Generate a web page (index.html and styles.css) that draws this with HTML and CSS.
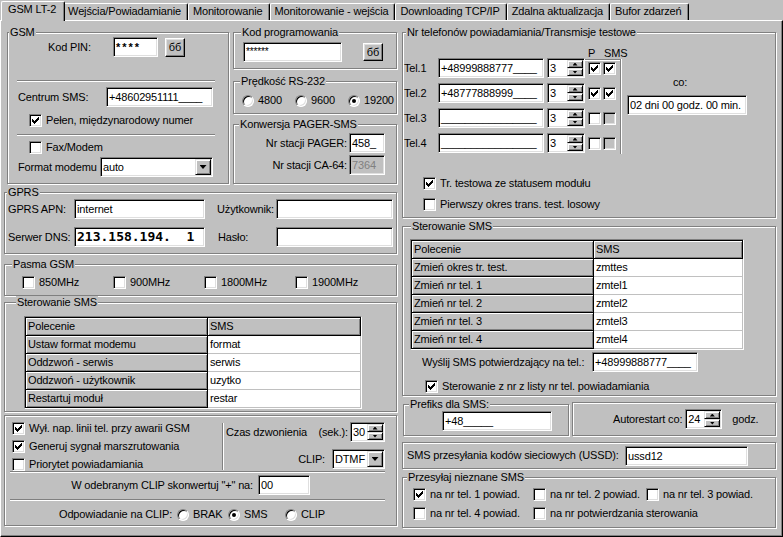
FILE: index.html
```html
<!DOCTYPE html>
<html>
<head>
	<meta charset="utf-8">
	<link rel="stylesheet" href="styles.css">
</head>
<body>
	<div class="tabs">
		<div class="tab active">GSM LT-2</div>
		<div class="tab">Wejścia/Powiadamianie</div>
		<div class="tab">Monitorowanie</div>
		<div class="tab">Monitorowanie - wejścia</div>
		<div class="tab">Downloading TCP/IP</div>
		<div class="tab">Zdalna aktualizacja</div>
		<div class="tab">Bufor zdarzeń</div>
	</div>

	<div class="sheet">
		<!-- left column -->
		<div class="col-left">
			<div class="top-row">
				<div class="group" id="gsm">
					<span class="legend">GSM</span>
					<div class="row" id="pin-row">
						<span class="lbl">Kod PIN:</span>
						<div class="edit" id="pin">****</div>
						<div class="btn eye">бб</div>
					</div>
					<div class="sep gsm-sep" id="gsm-sep1"></div>
					<div class="row" id="centrum-row">
						<span class="lbl">Centrum SMS:</span>
						<div class="edit">+48602951111____</div>
					</div>
					<div class="row check" id="pelen-row">
						<span class="chk"><svg viewBox="0 0 7 7"><path d="M0 2h1v1h1v1h1v-1h1v-1h1v-1h1v-1h1v3h-1v1h-1v1h-1v1h-1v1h-1v-1h-1v-1h-1z"/></svg></span>
						<span>Pełen, międzynarodowy numer</span>
					</div>
					<div class="sep gsm-sep" id="gsm-sep2"></div>
					<div class="row check" id="fax-row">
						<span class="chk"></span>
						<span>Fax/Modem</span>
					</div>
					<div class="row" id="format-row">
						<span class="lbl">Format modemu</span>
						<div class="edit combo"><span class="val">auto</span><span class="drop"></span></div>
					</div>
				</div>

				<div class="stack">
					<div class="group" id="kod">
						<span class="legend">Kod programowania</span>
						<div class="row" id="kod-row">
							<div class="edit" id="kod-edit">******</div>
							<div class="btn eye">бб</div>
						</div>
					</div>
					<div class="group" id="predk">
						<span class="legend">Prędkość RS-232</span>
						<div class="row" id="predk-row">
							<span class="ropt"><span class="radio"></span>4800</span>
							<span class="ropt"><span class="radio"></span>9600</span>
							<span class="ropt"><span class="radio on"></span>19200</span>
						</div>
					</div>
					<div class="group" id="konw">
						<span class="legend">Konwersja PAGER-SMS</span>
						<div class="row konw-row" id="pager-row">
							<span>Nr stacji PAGER:</span>
							<div class="edit">458_</div>
						</div>
						<div class="row konw-row" id="ca-row">
							<span>Nr stacji CA-64:</span>
							<div class="edit disabled">7364</div>
						</div>
					</div>
				</div>
			</div>

			<div class="group" id="gprs">
				<span class="legend">GPRS</span>
				<div class="row gprs-row" id="apn-row">
					<span class="lbl">GPRS APN:</span>
					<div class="edit wide">internet</div>
					<span class="lbl2">Użytkownik:</span>
					<div class="edit narrow"></div>
				</div>
				<div class="row gprs-row" id="dns-row">
					<span class="lbl">Serwer DNS:</span>
					<div class="edit wide dns">213.158.194.  1</div>
					<span class="lbl2">Hasło:</span>
					<div class="edit narrow"></div>
				</div>
			</div>

			<div class="group" id="pasma">
				<span class="legend">Pasma GSM</span>
				<div class="row" id="pasma-row">
					<span class="popt check"><span class="chk"></span>850MHz</span>
					<span class="popt check"><span class="chk"></span>900MHz</span>
					<span class="popt check"><span class="chk"></span>1800MHz</span>
					<span class="popt check"><span class="chk"></span>1900MHz</span>
				</div>
			</div>

			<div class="group" id="ster-l">
				<span class="legend">Sterowanie SMS</span>
				<div class="grid" id="grid-l">
					<div class="cell fix">Polecenie</div><div class="cell fix">SMS</div>
					<div class="cell fix">Ustaw format modemu</div><div class="cell">format</div>
					<div class="cell fix">Oddzwoń - serwis</div><div class="cell">serwis</div>
					<div class="cell fix">Oddzwoń - użytkownik</div><div class="cell">uzytko</div>
					<div class="cell fix">Restartuj moduł</div><div class="cell">restar</div>
				</div>
			</div>

			<div class="group" id="bottom">
				<div class="top-sec">
					<div class="checks">
						<div class="row check">
							<span class="chk"><svg viewBox="0 0 7 7"><path d="M0 2h1v1h1v1h1v-1h1v-1h1v-1h1v-1h1v3h-1v1h-1v1h-1v1h-1v1h-1v-1h-1v-1h-1z"/></svg></span>
							<span>Wył. nap. linii tel. przy awarii GSM</span>
						</div>
						<div class="row check">
							<span class="chk"><svg viewBox="0 0 7 7"><path d="M0 2h1v1h1v1h1v-1h1v-1h1v-1h1v-1h1v3h-1v1h-1v1h-1v1h-1v1h-1v-1h-1v-1h-1z"/></svg></span>
							<span>Generuj sygnał marszrutowania</span>
						</div>
						<div class="row check">
							<span class="chk"></span>
							<span>Priorytet powiadamiania</span>
						</div>
					</div>
					<div class="vsep"></div>
					<div class="ring">
						<div class="row">
							<span class="grow">Czas dzwonienia</span>
							<span>(sek.):</span>
							<div class="edit spin" id="ring-spin"><span class="val">30</span><span class="sbtns"><span class="sbtn up"></span><span class="sbtn dn"></span></span></div>
						</div>
						<div class="row" id="clip-row">
							<span>CLIP:</span>
							<div class="edit combo" id="clip-combo"><span class="val">DTMF</span><span class="drop"></span></div>
						</div>
					</div>
				</div>
				<div class="sep bottom-sep"></div>
				<div class="row" id="konwert-row">
					<span class="lbl">W odebranym CLIP skonwertuj "+" na:</span>
					<div class="edit">00</div>
				</div>
				<div class="sep bottom-sep" id="bottom-sep2"></div>
				<div class="row" id="odp-row">
					<span class="lbl">Odpowiadanie na CLIP:</span>
					<span class="ropt brak"><span class="radio"></span>BRAK</span>
					<span class="ropt sms"><span class="radio on"></span>SMS</span>
					<span class="ropt"><span class="radio"></span>CLIP</span>
				</div>
			</div>
		</div>

		<!-- right column -->
		<div class="col-right">
			<div class="group" id="nrtel">
				<span class="legend">Nr telefonów powiadamiania/Transmisje testowe</span>
				<div class="tel-top">
					<div class="tel-rows">
						<div class="row tel-row">
							<span class="lbl">Tel.1</span>
							<div class="edit tel">+48999888777____</div>
							<div class="edit spin tel-spin"><span class="val">3</span><span class="sbtns"><span class="sbtn up"></span><span class="sbtn dn"></span></span></div>
						</div>
						<div class="row tel-row">
							<span class="lbl">Tel.2</span>
							<div class="edit tel">+48777888999____</div>
							<div class="edit spin tel-spin"><span class="val">3</span><span class="sbtns"><span class="sbtn up"></span><span class="sbtn dn"></span></span></div>
						</div>
						<div class="row tel-row">
							<span class="lbl">Tel.3</span>
							<div class="edit tel">________________</div>
							<div class="edit spin tel-spin"><span class="val">3</span><span class="sbtns"><span class="sbtn up"></span><span class="sbtn dn"></span></span></div>
						</div>
						<div class="row tel-row">
							<span class="lbl">Tel.4</span>
							<div class="edit tel">________________</div>
							<div class="edit spin tel-spin"><span class="val">3</span><span class="sbtns"><span class="sbtn up"></span><span class="sbtn dn"></span></span></div>
						</div>
					</div>
					<div class="pcol">
						<div class="phead"><span class="p">P</span>SMS</div>
						<div class="pbox">
							<div class="prow">
								<span class="chk"><svg viewBox="0 0 7 7"><path d="M0 2h1v1h1v1h1v-1h1v-1h1v-1h1v-1h1v3h-1v1h-1v1h-1v1h-1v1h-1v-1h-1v-1h-1z"/></svg></span>
								<span class="chk"><svg viewBox="0 0 7 7"><path d="M0 2h1v1h1v1h1v-1h1v-1h1v-1h1v-1h1v3h-1v1h-1v1h-1v1h-1v1h-1v-1h-1v-1h-1z"/></svg></span>
							</div>
							<div class="prow">
								<span class="chk"><svg viewBox="0 0 7 7"><path d="M0 2h1v1h1v1h1v-1h1v-1h1v-1h1v-1h1v3h-1v1h-1v1h-1v1h-1v1h-1v-1h-1v-1h-1z"/></svg></span>
								<span class="chk"><svg viewBox="0 0 7 7"><path d="M0 2h1v1h1v1h1v-1h1v-1h1v-1h1v-1h1v3h-1v1h-1v1h-1v1h-1v1h-1v-1h-1v-1h-1z"/></svg></span>
							</div>
							<div class="prow">
								<span class="chk"></span>
								<span class="chk dis"></span>
							</div>
							<div class="prow">
								<span class="chk"></span>
								<span class="chk dis"></span>
							</div>
						</div>
					</div>
					<div class="cocol">
						<div class="co">co:</div>
						<div class="edit">02 dni 00 godz. 00 min.</div>
					</div>
				</div>
				<div class="row check" id="tr-row">
					<span class="chk"><svg viewBox="0 0 7 7"><path d="M0 2h1v1h1v1h1v-1h1v-1h1v-1h1v-1h1v3h-1v1h-1v1h-1v1h-1v1h-1v-1h-1v-1h-1z"/></svg></span>
					<span>Tr. testowa ze statusem modułu</span>
				</div>
				<div class="row check" id="pierwszy-row">
					<span class="chk"></span>
					<span>Pierwszy okres trans. test. losowy</span>
				</div>
			</div>

			<div class="group" id="ster-r">
				<span class="legend">Sterowanie SMS</span>
				<div class="grid" id="grid-r">
					<div class="cell fix">Polecenie</div><div class="cell fix">SMS</div>
					<div class="cell fix">Zmień okres tr. test.</div><div class="cell">zmttes</div>
					<div class="cell fix">Zmień nr tel. 1</div><div class="cell">zmtel1</div>
					<div class="cell fix">Zmień nr tel. 2</div><div class="cell">zmtel2</div>
					<div class="cell fix">Zmień nr tel. 3</div><div class="cell">zmtel3</div>
					<div class="cell fix">Zmień nr tel. 4</div><div class="cell">zmtel4</div>
				</div>
				<div class="row" id="wyslij-row">
					<span class="lbl">Wyślij SMS potwierdzający na tel.:</span>
					<div class="edit">+48999888777____</div>
				</div>
				<div class="row check" id="ster-row">
					<span class="chk"><svg viewBox="0 0 7 7"><path d="M0 2h1v1h1v1h1v-1h1v-1h1v-1h1v-1h1v3h-1v1h-1v1h-1v1h-1v1h-1v-1h-1v-1h-1z"/></svg></span>
					<span>Sterowanie z nr z listy nr tel. powiadamiania</span>
				</div>
			</div>

			<div class="prow-line">
				<div class="group" id="prefiks">
					<span class="legend">Prefiks dla SMS:</span>
					<div class="edit" id="prefiks-edit">+48_____</div>
				</div>
				<div class="group" id="autor">
					<span>Autorestart co:</span>
					<div class="edit spin" id="autor-spin"><span class="val">24</span><span class="sbtns"><span class="sbtn up"></span><span class="sbtn dn"></span></span></div>
					<span class="godz">godz.</span>
				</div>
			</div>

			<div class="group" id="ussd">
				<span class="lbl">SMS przesyłania kodów sieciowych (USSD):</span>
				<div class="edit">ussd12</div>
			</div>

			<div class="group" id="przes">
				<span class="legend">Przesyłaj nieznane SMS</span>
				<div class="pgrid">
					<span class="row check"><span class="chk"><svg viewBox="0 0 7 7"><path d="M0 2h1v1h1v1h1v-1h1v-1h1v-1h1v-1h1v3h-1v1h-1v1h-1v1h-1v1h-1v-1h-1v-1h-1z"/></svg></span>na nr tel. 1 powiad.</span>
					<span class="row check"><span class="chk"></span>na nr tel. 2 powiad.</span>
					<span class="row check"><span class="chk"></span>na nr tel. 3 powiad.</span>
					<span class="row check"><span class="chk"></span>na nr tel. 4 powiad.</span>
					<span class="row check wide-cell"><span class="chk"></span>na nr potwierdzania sterowania</span>
				</div>
			</div>
		</div>
	</div>
</body>
</html>
```

FILE: styles.css
```css
body {
	margin: 0;
	width: 783px;
	height: 537px;
	overflow: hidden;
	background: #c0c0c0;
	font: 11px/13px "Liberation Sans", Arial, sans-serif;
	letter-spacing: -0.15px;
	color: #000;
}

/* tabs */
.tabs {
	display: flex;
	align-items: flex-end;
	height: 20px;
	padding-left: 3px;
}

.tab {
	box-sizing: border-box;
	height: 17px;
	padding: 1px 6px 0 4px;
	border: 1px solid;
	border-color: #fff #000 transparent #fff;
	border-bottom: 0;
	border-radius: 2px 2px 0 0;
	box-shadow: inset -1px 0 #808080;
	background: #c0c0c0;
	white-space: nowrap;
}

.tab.active {
	position: relative;
	z-index: 1;
	height: 20px;
	margin: 0 -2px -1px -2px;
	padding: 1px 8px 0 6px;
}

.sheet {
	display: flex;
	box-sizing: border-box;
	height: 517px;
	padding: 11px 0 0 3px;
	border: 1px solid;
	border-color: #fff #000 #000 #fff;
	box-shadow: inset -1px -1px #808080;
}

.col-left {
	width: 393px;
	display: flex;
	flex-direction: column;
	flex: none;
}

.col-right {
	width: 374px;
	margin-left: 5px;
	display: flex;
	flex-direction: column;
	flex: none;
}

/* common controls */
.group {
	position: relative;
	box-sizing: border-box;
	border: 1px solid #808080;
	box-shadow: inset 1px 1px #fff, 1px 1px #fff;
	flex: none;
}

.legend {
	position: absolute;
	top: -7px;
	left: 5px;
	padding: 0 1px;
	background: #c0c0c0;
	white-space: nowrap;
}

.row {
	display: flex;
	align-items: center;
	white-space: nowrap;
}

.lbl, .lbl2 {
	flex: none;
	white-space: nowrap;
}

.edit {
	box-sizing: border-box;
	flex: none;
	height: 20px;
	padding: 0 2px;
	background: #fff;
	border: 1px solid;
	border-color: #808080 #fff #fff #808080;
	box-shadow: inset 1px 1px #000, inset -1px -1px #dfdfdf;
	line-height: 18px;
	white-space: pre;
	overflow: hidden;
}

.edit.disabled {
	background: #c0c0c0;
	color: #808080;
}

.btn {
	box-sizing: border-box;
	flex: none;
	display: flex;
	align-items: center;
	justify-content: center;
	background: #c0c0c0;
	border: 1px solid;
	border-color: #fff #000 #000 #fff;
	box-shadow: inset -1px -1px #808080, inset 1px 1px #dfdfdf;
}

.eye {
	width: 20px;
	height: 19px;
}

.sep {
	height: 0;
	border-top: 1px solid #808080;
	border-bottom: 1px solid #fff;
}

.vsep {
	width: 0;
	border-left: 1px solid #808080;
	border-right: 1px solid #fff;
}

.check {
	gap: 4px;
}

.chk {
	box-sizing: border-box;
	flex: none;
	width: 13px;
	height: 13px;
	display: flex;
	align-items: center;
	justify-content: center;
	background: #fff;
	border: 1px solid;
	border-color: #808080 #fff #fff #808080;
	box-shadow: inset 1px 1px #000, inset -1px -1px #dfdfdf;
}

.chk.dis {
	background: #c0c0c0;
}

.chk svg {
	display: block;
	width: 7px;
	height: 7px;
	shape-rendering: crispEdges;
}

.radio {
	box-sizing: border-box;
	flex: none;
	width: 12px;
	height: 12px;
	display: flex;
	align-items: center;
	justify-content: center;
	background: #fff;
	border-radius: 50%;
	border: 1px solid;
	border-color: #808080 #fff #fff #808080;
	box-shadow: inset 1px 1px #000, inset -1px -1px #dfdfdf;
}

.radio.on::after {
	content: "";
	width: 4px;
	height: 4px;
	border-radius: 50%;
	background: #000;
}

.ropt {
	display: flex;
	align-items: center;
	gap: 4px;
	flex: none;
}

.spin, .combo {
	display: flex;
	align-items: center;
	padding: 0 1px 0 2px;
}

.val {
	flex: 1;
	overflow: hidden;
}

.sbtns {
	display: flex;
	flex-direction: column;
	flex: none;
	width: 16px;
	height: 16px;
}

.sbtn, .drop {
	box-sizing: border-box;
	display: flex;
	align-items: center;
	justify-content: center;
	background: #c0c0c0;
	border: 1px solid;
	border-color: #dfdfdf #000 #000 #dfdfdf;
	box-shadow: inset 1px 1px #fff, inset -1px -1px #808080;
}

.sbtn {
	flex: 1;
}

.sbtn::before {
	content: "";
	width: 5px;
	height: 3px;
	background: #000;
}

.sbtn.up::before {
	clip-path: polygon(50% 0, 100% 100%, 0 100%);
}

.sbtn.dn::before {
	clip-path: polygon(0 0, 100% 0, 50% 100%);
}

.drop {
	flex: none;
	width: 16px;
	height: 16px;
}

.drop::before {
	content: "";
	width: 7px;
	height: 4px;
	background: #000;
	clip-path: polygon(0 0, 100% 0, 50% 100%);
}

/* string grid */
.grid {
	box-sizing: border-box;
	display: grid;
	grid-template-columns: 182px 1fr;
	grid-auto-rows: 18px;
	padding: 1px 0 0 1px;
	background: #fff;
	border: 1px solid;
	border-color: #808080 #fff #fff #808080;
	box-shadow: inset 1px 1px #000;
}

.cell {
	box-sizing: border-box;
	padding-left: 2px;
	line-height: 17px;
	border-right: 1px solid #c0c0c0;
	border-bottom: 1px solid #c0c0c0;
	white-space: nowrap;
	overflow: hidden;
}

.cell.fix {
	background: #c0c0c0;
	border-color: #000;
	box-shadow: inset 1px 1px #fff, inset -1px -1px #808080;
}

/* GSM */
.top-row {
	display: flex;
}

#gsm {
	width: 222px;
	height: 152px;
	margin-left: 3px;
}

#gsm .legend {
	left: 1px;
}

#pin-row {
	margin: 4px 0 0 40px;
}

#pin-row .lbl {
	width: 65px;
}

#pin {
	width: 45px;
	font-weight: bold;
	letter-spacing: 2px;
}

#pin-row .eye {
	margin-left: 7px;
}

.gsm-sep {
	width: 198px;
	margin-left: 9px;
}

#gsm-sep1 {
	margin-top: 23px;
}

#centrum-row {
	margin: 5px 0 0 10px;
}

#centrum-row .lbl {
	width: 88px;
}

#centrum-row .edit {
	width: 107px;
}

#pelen-row {
	margin: 7px 0 0 21px;
}

#gsm-sep2 {
	margin-top: 7px;
}

#fax-row {
	margin: 5px 0 0 21px;
}

#format-row {
	margin: 3px 0 0 10px;
}

#format-row .lbl {
	width: 82px;
}

#format-row .combo {
	width: 113px;
}

/* right stack beside GSM */
.stack {
	width: 164px;
	margin-left: 4px;
	display: flex;
	flex-direction: column;
}

#kod {
	height: 37px;
}

#kod .legend {
	left: 7px;
}

#kod-row {
	margin: 9px 0 0 9px;
}

#kod-edit {
	width: 99px;
	font-size: 10px;
}

#kod-row .eye {
	margin-left: 21px;
	height: 18px;
}

#predk {
	height: 33px;
	margin-top: 12px;
}

#predk .legend {
	left: 6px;
}

#predk-row {
	margin: 12px 0 0 8px;
}

#predk-row .ropt {
	width: 53px;
}

#konw {
	height: 60px;
	margin-top: 10px;
}

.konw-row {
	justify-content: flex-end;
	padding-right: 11px;
	gap: 2px;
}

.konw-row .edit {
	width: 36px;
}

#pager-row {
	margin-top: 8px;
}

#ca-row {
	margin-top: 2px;
}

/* GPRS */
#gprs {
	height: 62px;
	margin-top: 8px;
}

#gprs .legend {
	left: 2px;
}

.gprs-row {
	margin-left: 3px;
}

.gprs-row .lbl {
	width: 66px;
}

.gprs-row .wide {
	width: 131px;
}

.gprs-row .lbl2 {
	width: 59px;
	margin-left: 12px;
}

.gprs-row .narrow {
	width: 117px;
}

#apn-row {
	margin-top: 6px;
}

#dns-row {
	margin-top: 8px;
}

#dns-row .lbl2 {
	margin-left: 13px;
	width: 58px;
}

.dns {
	font: bold 13px/18px "DejaVu Sans Mono", "Liberation Mono", monospace;
	letter-spacing: 0;
}

/* Pasma */
#pasma {
	height: 32px;
	margin-top: 10px;
}

#pasma .legend {
	left: 7px;
}

#pasma-row {
	margin: 11px 0 0 17px;
}

.popt {
	display: flex;
	align-items: center;
	width: 91px;
	flex: none;
}

/* Sterowanie left */
#ster-l {
	height: 110px;
	margin-top: 6px;
}

#ster-l .legend {
	left: 11px;
}

#grid-l {
	width: 338px;
	margin: 13px 0 0 19px;
}

/* bottom box */
#bottom {
	height: 111px;
	margin-top: 3px;
}

.top-sec {
	display: flex;
	height: 49px;
	margin-top: 6px;
}

.checks {
	display: flex;
	flex-direction: column;
	gap: 5px;
	width: 210px;
	margin-left: 7px;
}

.top-sec .vsep {
	height: 47px;
	margin-top: 1px;
}

.ring {
	width: 159px;
	margin-left: 2px;
}

.grow {
	flex: 1;
}

#ring-spin {
	width: 35px;
	margin-left: 2px;
}

#clip-row {
	justify-content: flex-end;
	gap: 7px;
	margin-top: 7px;
}

#clip-combo {
	width: 53px;
}

.bottom-sep {
	width: 375px;
	margin-left: 5px;
}

#konwert-row {
	margin-top: 2px;
}

#konwert-row .lbl {
	width: 248px;
	margin-right: 5px;
	text-align: right;
}

#konwert-row .edit {
	width: 52px;
}

#bottom-sep2 {
	margin-top: 4px;
}

#odp-row {
	margin: 7px 0 0 54px;
}

#odp-row .lbl {
	width: 118px;
}

#odp-row .brak {
	width: 51px;
}

#odp-row .sms {
	width: 57px;
}

/* Nr telefonów */
#nrtel {
	height: 186px;
}

#nrtel .legend {
	left: 3px;
}

.tel-top {
	display: flex;
	margin-top: 14px;
}

.tel-rows {
	display: flex;
	flex-direction: column;
	gap: 5px;
	width: 181px;
	margin-left: 1px;
	padding-top: 11px;
}

.tel-row .lbl {
	width: 34px;
}

.tel {
	width: 106px;
}

.tel-spin {
	width: 38px;
	margin-left: 3px;
}

.pcol {
	width: 36px;
	flex: none;
}

.phead {
	height: 12px;
	line-height: 12px;
	padding-left: 3px;
	white-space: nowrap;
}

.phead .p {
	display: inline-block;
	width: 16px;
}

.pbox {
	height: 92px;
	border-top: 1px solid #808080;
	border-right: 1px solid #808080;
	box-shadow: inset 0 1px #fff, 1px 0 #fff;
	padding: 2px 0 0 3px;
	display: flex;
	flex-direction: column;
	gap: 12px;
}

.prow {
	display: flex;
	gap: 2px;
}

.cocol {
	width: 120px;
	margin-left: 6px;
	flex: none;
}

.co {
	margin: 29px 0 0 46px;
}

.cocol .edit {
	width: 120px;
	margin-top: 6px;
}

#tr-row {
	margin: 23px 0 0 20px;
}

#pierwszy-row {
	margin: 8px 0 0 20px;
}

/* Sterowanie right */
#ster-r {
	height: 170px;
	margin-top: 8px;
}

#ster-r .legend {
	left: 8px;
}

#grid-r {
	width: 334px;
	margin: 12px 0 0 7px;
}

#wyslij-row {
	margin: 2px 0 0 19px;
}

#wyslij-row .lbl {
	width: 170px;
}

#wyslij-row .edit {
	width: 106px;
}

#ster-row {
	margin: 8px 0 0 22px;
}

/* prefiks / autorestart */
.prow-line {
	display: flex;
	align-items: flex-end;
	height: 34px;
	margin-top: 6px;
}

#prefiks {
	width: 166px;
	height: 32px;
	margin-left: 1px;
}

#prefiks-edit {
	width: 110px;
	margin: 6px 0 0 38px;
}

#autor {
	display: flex;
	align-items: center;
	width: 204px;
	height: 34px;
	margin-left: 3px;
	padding-left: 40px;
	white-space: nowrap;
}

#autor-spin {
	width: 37px;
	margin-left: 3px;
}

.godz {
	margin-left: 10px;
}

/* USSD */
#ussd {
	display: flex;
	align-items: center;
	height: 27px;
	margin-top: 6px;
}

#ussd .lbl {
	width: 218px;
	margin-left: 4px;
}

#ussd .edit {
	width: 123px;
}

/* Przesyłaj nieznane SMS */
#przes {
	height: 51px;
	margin-top: 8px;
}

#przes .legend {
	left: 4px;
}

.pgrid {
	display: grid;
	grid-template-columns: 120px 113px auto;
	row-gap: 6px;
	margin: 10px 0 0 10px;
}

.wide-cell {
	grid-column: span 2;
}
```
